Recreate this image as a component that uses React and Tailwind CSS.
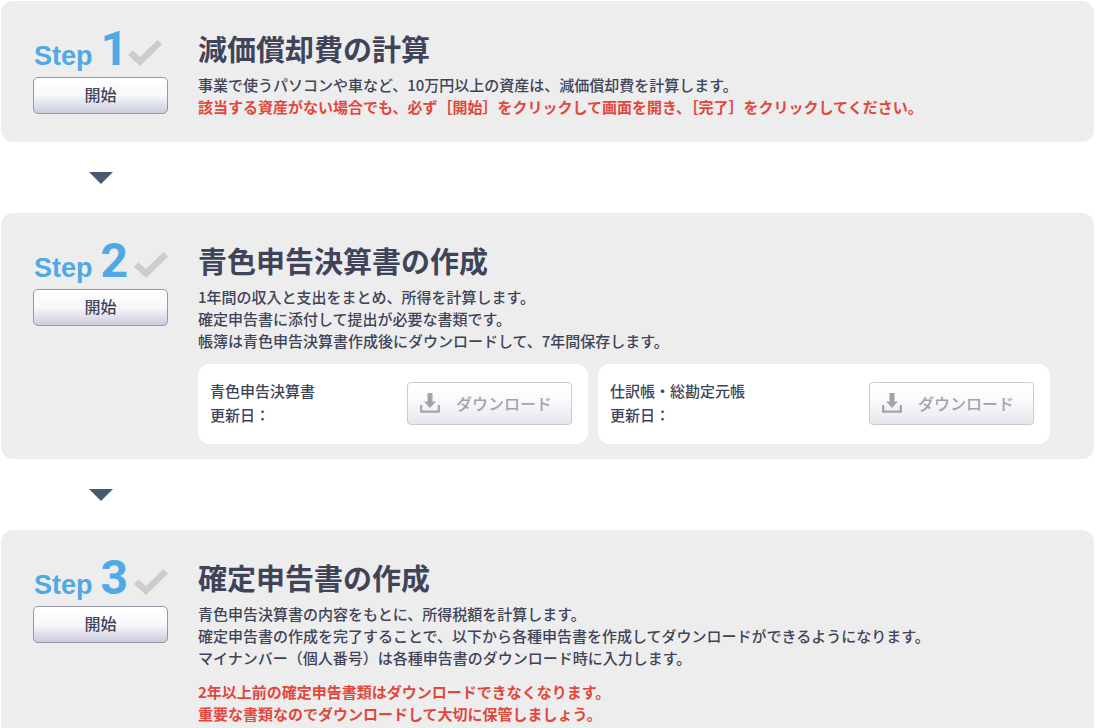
import React from "react";

const steps = [
  {
    number: 1,
    title: "減価償却費の計算",
    lines: ["事業で使うパソコンや車など、10万円以上の資産は、減価償却費を計算します。"],
    warnings: [
      "該当する資産がない場合でも、必ず［開始］をクリックして画面を開き、［完了］をクリックしてください。",
    ],
  },
  {
    number: 2,
    title: "青色申告決算書の作成",
    lines: [
      "1年間の収入と支出をまとめ、所得を計算します。",
      "確定申告書に添付して提出が必要な書類です。",
      "帳簿は青色申告決算書作成後にダウンロードして、7年間保存します。",
    ],
    downloads: ["青色申告決算書", "仕訳帳・総勘定元帳"],
  },
  {
    number: 3,
    title: "確定申告書の作成",
    lines: [
      "青色申告決算書の内容をもとに、所得税額を計算します。",
      "確定申告書の作成を完了することで、以下から各種申告書を作成してダウンロードができるようになります。",
      "マイナンバー（個人番号）は各種申告書のダウンロード時に入力します。",
    ],
    warnings: [
      "2年以上前の確定申告書類はダウンロードできなくなります。",
      "重要な書類なのでダウンロードして大切に保管しましょう。",
    ],
    separateWarnings: true,
  },
];

const CheckMark = () => (
  <svg className="w-[34px] h-[26px] shrink-0" viewBox="0 0 34 26" aria-hidden="true">
    <path d="M0 15L4.5 10.5L12 17L29.5 0L34 4.5L12 26Z" fill="#cccccc" />
  </svg>
);

const DownloadIcon = () => (
  <svg className="w-5 h-5 shrink-0" viewBox="0 0 20 20" aria-hidden="true">
    <path d="M7.5 0H12.5V8.5H16L10 15L4 8.5H7.5Z" fill="#a0a4ae" />
    <path d="M1.2 12V18.7H18.8V12" fill="none" stroke="#a0a4ae" strokeWidth="2.2" />
  </svg>
);

const DownArrow = () => (
  <div className="h-[71px] w-[200px] flex items-center justify-center">
    <svg className="w-6 h-3" viewBox="0 0 24 12" aria-hidden="true">
      <path d="M0 0H24L12 12Z" fill="#475a6e" />
    </svg>
  </div>
);

const DownloadBox = ({ label }) => (
  <div className="flex items-center justify-between h-20 pl-3 pr-4 pb-[2px] rounded-xl bg-white">
    <p className="text-[15px] leading-6">
      {label}
      <br />
      更新日：
    </p>
    <button
      type="button"
      disabled
      aria-label={`${label} ダウンロード`}
      className="flex items-center gap-4 w-[165px] h-[43px] px-3 rounded border border-[#cacbd1] bg-gradient-to-b from-white via-[#f8f8fb] to-[#e6e7ee] text-base text-[#a0a4ae]"
    >
      <DownloadIcon />
      ダウンロード
    </button>
  </div>
);

const StepCard = ({ step }) => (
  <section className="flex gap-[30px] pl-8 pr-11 rounded-xl bg-[#ededed]">
    <div className="w-[135px] shrink-0 pt-6">
      <div className="flex items-end gap-[6px] h-[52px] pl-px">
        <p className="flex items-baseline gap-2 text-[#4fa9e4] font-bold leading-[42px]">
          <span className="text-[27px] leading-[42px] font-['Liberation_Sans',sans-serif]">Step</span>
          <span
            className={`text-5xl leading-[42px] font-[Roboto,sans-serif] ${
              step.number === 1 ? "w-[21px]" : "w-[27px]"
            }`}
          >
            {step.number}
          </span>
        </p>
        <div className="pb-[11px]">
          <CheckMark />
        </div>
      </div>
      <button
        type="button"
        className="block w-full h-[37px] pb-1 rounded-[5px] border border-[#9497a5] bg-gradient-to-b from-white via-[#f8f8fb] to-[#c9ccdc] text-base cursor-pointer"
      >
        開始
      </button>
    </div>
    <div className="flex-1 min-w-0 pt-[25px]">
      <h2 className="mb-1 text-[29px] leading-[44px] font-bold">{step.title}</h2>
      <div className="text-[15px] leading-[22px]">
        {step.lines.map((line) => (
          <p key={line}>{line}</p>
        ))}
      </div>
      {step.warnings && (
        <div
          className={`text-[15px] leading-[22px] font-bold text-[#e0483e] ${
            step.separateWarnings ? "mt-3" : ""
          }`}
        >
          {step.warnings.map((line) => (
            <p key={line}>{line}</p>
          ))}
        </div>
      )}
      {step.downloads ? (
        <div className="grid grid-cols-[390fr_452fr] gap-[10px] mt-3 pb-[15px]">
          {step.downloads.map((label) => (
            <DownloadBox key={label} label={label} />
          ))}
        </div>
      ) : (
        <div className="h-6" />
      )}
    </div>
  </section>
);

const App = () => {
  return (
    <main className="h-screen overflow-hidden p-px bg-white font-['Noto_Sans_CJK_JP',sans-serif] font-medium text-[#3f4459]">
      {steps.map((step, index) => (
        <React.Fragment key={step.number}>
          {index > 0 && <DownArrow />}
          <StepCard step={step} />
        </React.Fragment>
      ))}
    </main>
  );
};

export default App;
